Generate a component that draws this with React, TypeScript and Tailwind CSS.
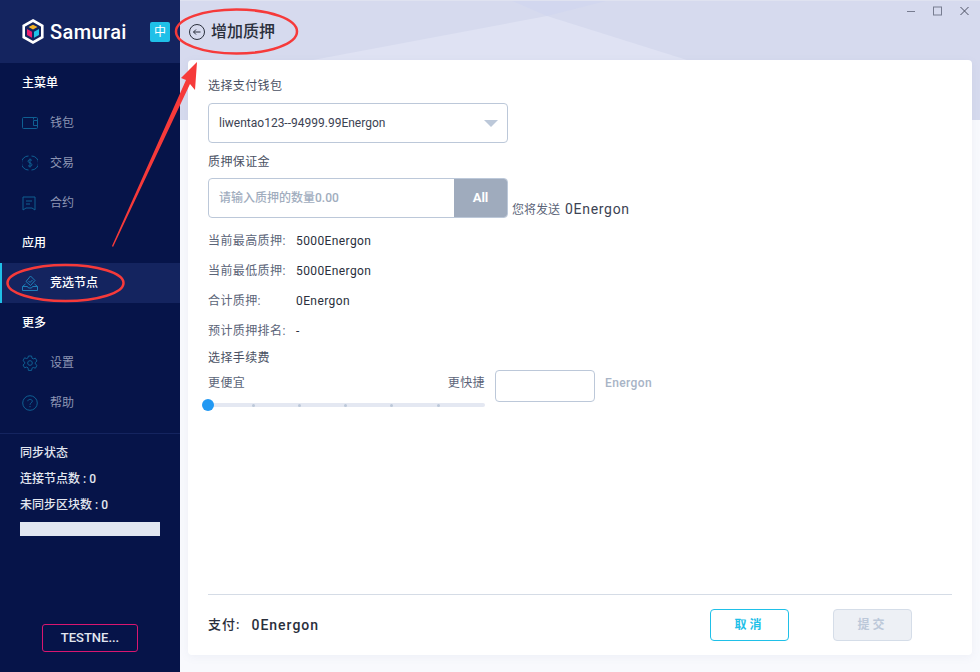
const FONT = "font-['Roboto','Noto_Sans_CJK_SC',sans-serif]"

const Logo = () => (
  <svg width="22" height="25" viewBox="0 0 22 25">
    <path d="M11 1.500 20.300 6.800v11.400L11 23.500 1.700 18.200V6.800Z" fill="none" stroke="#fff" strokeWidth="2.600" />
    <path d="M6.500 8 11 5.800 15.500 8 11 10.500Z" fill="#f5b324" />
    <path d="M5 10l5 2.800v6L5 16Z" fill="#ec1f6e" />
    <path d="M17 10l-5 2.800v6l5-2.800Z" fill="#20c4e8" />
  </svg>
)

const WalletIcon = () => (
  <svg width="16" height="14" viewBox="0 0 16 14" fill="none" stroke="#0f5f92" strokeWidth="1">
    <rect x="0.500" y="1.500" width="15" height="11" rx="1" />
    <path d="M15.500 4.500h-4v5h4M11.500 1.500v2" />
  </svg>
)

const DollarIcon = () => (
  <svg width="16" height="16" viewBox="0 0 16 16" fill="none" stroke="#0f5f92" strokeWidth="1">
    <path d="M9.500 1A7 7 0 0 1 9.500 15M6.500 15A7 7 0 0 1 6.500 1" />
    <path d="M10 5.500C9.500 4.500 6 4.300 6 6.200S10 7.800 10 9.800 6.500 11.500 6 10.500M8 3.500v9" />
  </svg>
)

const ContractIcon = () => (
  <svg width="14" height="15" viewBox="0 0 14 15" fill="none" stroke="#0f5f92" strokeWidth="1">
    <path d="M1 1h12v13l-3-2H4l-3 2Z" />
    <path d="M4 5h6M4 8h4" />
  </svg>
)

const VoteIcon = () => (
  <svg width="16" height="16" viewBox="0 0 16 16" fill="none" stroke="#1d7fb8" strokeWidth="1">
    <path d="M8.500 1 13 5.500l-4.500 5L4 6.500Z" />
    <path d="M6.500 6 8 7.500l2.500-2.500" />
    <path d="M3.500 9 .5 11.500v4h15v-4L12.500 9" />
    <path d="M.5 11.500h5l1 1.500h3l1-1.500h5" />
  </svg>
)

const GearIcon = () => (
  <svg width="16" height="16" viewBox="0 0 24 24" fill="none" stroke="#0f5f92" strokeWidth="1.500">
    <path d="M9.600 1.500h4.800l.6 3.300 1.900 1.100 3.200-1.100 2.400 4.200-2.600 2.200v2.200l2.600 2.200-2.400 4.200-3.200-1.100-1.900 1.100-.6 3.300H9.600L9 19.200l-1.900-1.100-3.200 1.100-2.400-4.200 2.600-2.200v-2.200L1.500 8.400 3.900 4.200l3.200 1.100L9 4.200Z" />
    <circle cx="12" cy="12" r="3.500" />
  </svg>
)

const HelpIcon = () => (
  <svg width="16" height="16" viewBox="0 0 16 16" fill="none" stroke="#0f5f92" strokeWidth="1">
    <circle cx="8" cy="8" r="7.300" />
    <path d="M5.800 6.200C5.800 3.800 10.300 3.800 10.300 6.200 10.300 7.800 8 7.800 8 9.800M8 11v1.200" />
  </svg>
)

const NavLabel = ({ text }: { text: string }) => (
  <div className="flex h-10 items-center pl-[22px] text-xs font-medium text-white">{text}</div>
)

const NavItem = ({ icon, text, active }: { icon: React.ReactNode; text: string; active?: boolean }) => (
  <div
    className={`flex h-10 items-center border-l-2 pl-5 text-xs ${
      active ? 'border-[#1fc0e8] bg-[#14245f] font-medium text-white' : 'border-transparent text-[#8d95b3]'
    }`}
  >
    <span className="flex w-7 items-center">{icon}</span>
    <span>{text}</span>
  </div>
)

const Stat = ({ label, value }: { label: string; value: string }) => (
  <div className="flex h-[30px] items-center text-xs">
    <span className="w-[88px] tracking-[0.4px] text-[#5b6478]">{label}</span>
    <span className="tracking-[0.4px] text-[#2a2f3c]">{value}</span>
  </div>
)

export default function App() {
  return (
    <div className={`${FONT} relative flex h-[672px] w-[980px] overflow-hidden bg-[#f8f9fd]`}>
      <aside className="flex w-[180px] shrink-0 flex-col bg-[#061449]">
        <div className="flex h-[63px] shrink-0 items-center bg-[#14245f] pl-[22px]">
          <Logo />
          <span className="ml-[6px] text-[20px] font-medium tracking-[0.4px] text-white">Samurai</span>
          <span className="ml-auto mr-[10px] flex h-5 w-5 items-center justify-center rounded-[2px] bg-[#1fc0e8] text-xs text-white">
            中
          </span>
        </div>
        <NavLabel text="主菜单" />
        <NavItem icon={<WalletIcon />} text="钱包" />
        <NavItem icon={<DollarIcon />} text="交易" />
        <NavItem icon={<ContractIcon />} text="合约" />
        <NavLabel text="应用" />
        <NavItem icon={<VoteIcon />} text="竞选节点" active />
        <NavLabel text="更多" />
        <NavItem icon={<GearIcon />} text="设置" />
        <NavItem icon={<HelpIcon />} text="帮助" />
        <div className="mt-[10px] border-t border-[#14245f] px-5 pt-[6px] text-xs font-medium text-[#e3e7f0]">
          <div className="flex h-[26px] items-center">同步状态</div>
          <div className="flex h-[26px] items-center">连接节点数 : 0</div>
          <div className="flex h-[26px] items-center">未同步区块数 : 0</div>
          <div className="mt-1 h-[14px] w-[140px] bg-[#e2e7f0]" />
        </div>
        <div className="mt-auto mb-5 flex h-7 w-24 items-center justify-center self-center rounded-[3px] border border-[#d9166f] text-[13px] font-medium text-[#e3e7f0]">
          TESTNE...
        </div>
      </aside>

      <main className="relative flex-1">
        <svg className="absolute left-0 top-0" width="800" height="120" viewBox="0 0 800 120">
          <rect width="800" height="120" fill="#d6daee" />
          <path d="M133 60 367 16 507 60Z" fill="#dfe2f3" />
          <path d="M330 0H430L367 16Z" fill="#d2d7ef" />
          <path d="M0 0h800v1H0Z" fill="#dfe2f0" />
        </svg>

        <div className="relative flex h-[60px] items-center gap-[6px] pl-[9px] pt-[3px]">
          <svg width="16" height="16" viewBox="0 0 16 16" fill="none" stroke="#2a2f3c" strokeWidth="1">
            <circle cx="8" cy="8" r="7.500" />
            <path d="M11.500 8h-7M7 5.500 4.500 8 7 10.500" />
          </svg>
          <h1 className="text-base font-medium text-[#2a2f3c]">增加质押</h1>
        </div>

        <div className="absolute right-[11px] top-[5px] flex items-center gap-[18px] text-[#777c90]">
          <svg width="8" height="12" viewBox="0 0 8 12" stroke="currentColor" fill="none">
            <path d="M0 6.500h8" />
          </svg>
          <svg width="9" height="12" viewBox="0 0 9 12" stroke="currentColor" fill="none">
            <rect x="0.500" y="2" width="8" height="8" />
          </svg>
          <svg width="9" height="12" viewBox="0 0 9 12" stroke="#4a4f60" fill="none">
            <path d="M.5 2l8 8M8.500 2l-8 8" />
          </svg>
        </div>

        <div className="relative mx-2 flex h-[595px] flex-col rounded-[4px] bg-white px-5 shadow-[0_2px_8px_rgba(120,130,170,0.08)]">
          <div className="flex h-[43px] shrink-0 items-end pb-[9px] text-xs tracking-[0.4px] text-[#4a5163]">选择支付钱包</div>
          <div className="flex h-10 w-[300px] items-center justify-between rounded-[4px] border border-[#bcc8d9] pl-[10px] pr-[9px] text-xs text-[#3c4353]">
            <span>liwentao123--94999.99Energon</span>
            <span className="h-0 w-0 border-x-[7px] border-t-[7px] border-x-transparent border-t-[#bcc8d9]" />
          </div>
          <div className="flex h-[35px] shrink-0 items-center pt-[2px] text-xs tracking-[0.4px] text-[#4a5163]">质押保证金</div>
          <div className="flex items-end">
            <div className="flex h-10 w-[300px] overflow-hidden rounded-[4px] border border-[#bcc8d9]">
              <div className="flex flex-1 items-center pl-[10px] text-xs font-medium text-[#a1adbe]">请输入质押的数量0.00</div>
              <div className="flex w-[53px] items-center justify-center bg-[#9fabbd] text-[13px] font-bold text-white">All</div>
            </div>
            <span className="ml-1 translate-y-[1px] text-xs text-[#5b6478]">
              您将发送 <span className="ml-[2px] text-sm tracking-[0.7px] text-[#3c4353]">0Energon</span>
            </span>
          </div>

          <div className="mt-2">
            <Stat label="当前最高质押:" value="5000Energon" />
            <Stat label="当前最低质押:" value="5000Energon" />
            <Stat label="合计质押:" value="0Energon" />
            <Stat label="预计质押排名:" value="-" />
          </div>

          <div className="flex h-[24px] items-center text-xs tracking-[0.4px] text-[#4a5163]">选择手续费</div>

          <div className="flex items-start">
            <div className="w-[277px]">
              <div className="mt-[5px] flex justify-between text-xs tracking-[0.4px] text-[#5b6478]">
                <span>更便宜</span>
                <span>更快捷</span>
              </div>
              <div className="relative mt-3 h-[4px] rounded-full bg-[#e4e8f2]">
                <span className="absolute -left-[6px] -top-1 h-3 w-3 rounded-full bg-[#2299f3]" />
                <span className="absolute left-[44px] top-[0.5px] h-[3px] w-[3px] rounded-full bg-[#bcc8d9]" />
                <span className="absolute left-[90px] top-[0.5px] h-[3px] w-[3px] rounded-full bg-[#bcc8d9]" />
                <span className="absolute left-[136px] top-[0.5px] h-[3px] w-[3px] rounded-full bg-[#bcc8d9]" />
                <span className="absolute left-[182px] top-[0.5px] h-[3px] w-[3px] rounded-full bg-[#bcc8d9]" />
                <span className="absolute left-[229px] top-[0.5px] h-[3px] w-[3px] rounded-full bg-[#bcc8d9]" />
              </div>
            </div>
            <div className="ml-[10px] h-8 w-[100px] rounded-[4px] border border-[#bcc8d9]" />
            <span className="ml-[10px] mt-[5px] text-xs font-medium tracking-[0.4px] text-[#a8b4c6]">Energon</span>
          </div>

          <div className="mt-auto flex h-[61px] items-center border-t border-[#d5dce6]">
            <span className="flex items-center text-sm font-medium tracking-[1px] text-[#2a2f3c]">
              <span className="text-[13px]">支付:</span>
              <span className="ml-[11px]">0Energon</span>
            </span>
            <div className="ml-auto mr-10 flex gap-11">
              <button className="h-8 w-[79px] rounded-[4px] border border-[#1fc0e8] text-xs font-bold tracking-[3px] text-[#1fc0e8]">取消</button>
              <button className="h-8 w-[79px] rounded-[4px] border border-[#d5dde8] bg-[#edf0f5] text-xs font-bold tracking-[3px] text-[#bcc8d9]">提交</button>
            </div>
          </div>
        </div>
      </main>

      {/* red annotations drawn over the screenshot */}
      <svg className="pointer-events-none absolute left-0 top-0" width="980" height="672" viewBox="0 0 980 672" fill="none">
        <ellipse cx="236.500" cy="31.500" rx="60.500" ry="22" stroke="#f63a3a" strokeWidth="2.500" />
        <ellipse cx="65.500" cy="283" rx="58" ry="18" stroke="#f63a3a" strokeWidth="2.500" />
        <path d="M112 246 186 80 181 78 197 62 195 90 190 84 113 247Z" fill="#f63a3a" />
      </svg>
    </div>
  )
}
